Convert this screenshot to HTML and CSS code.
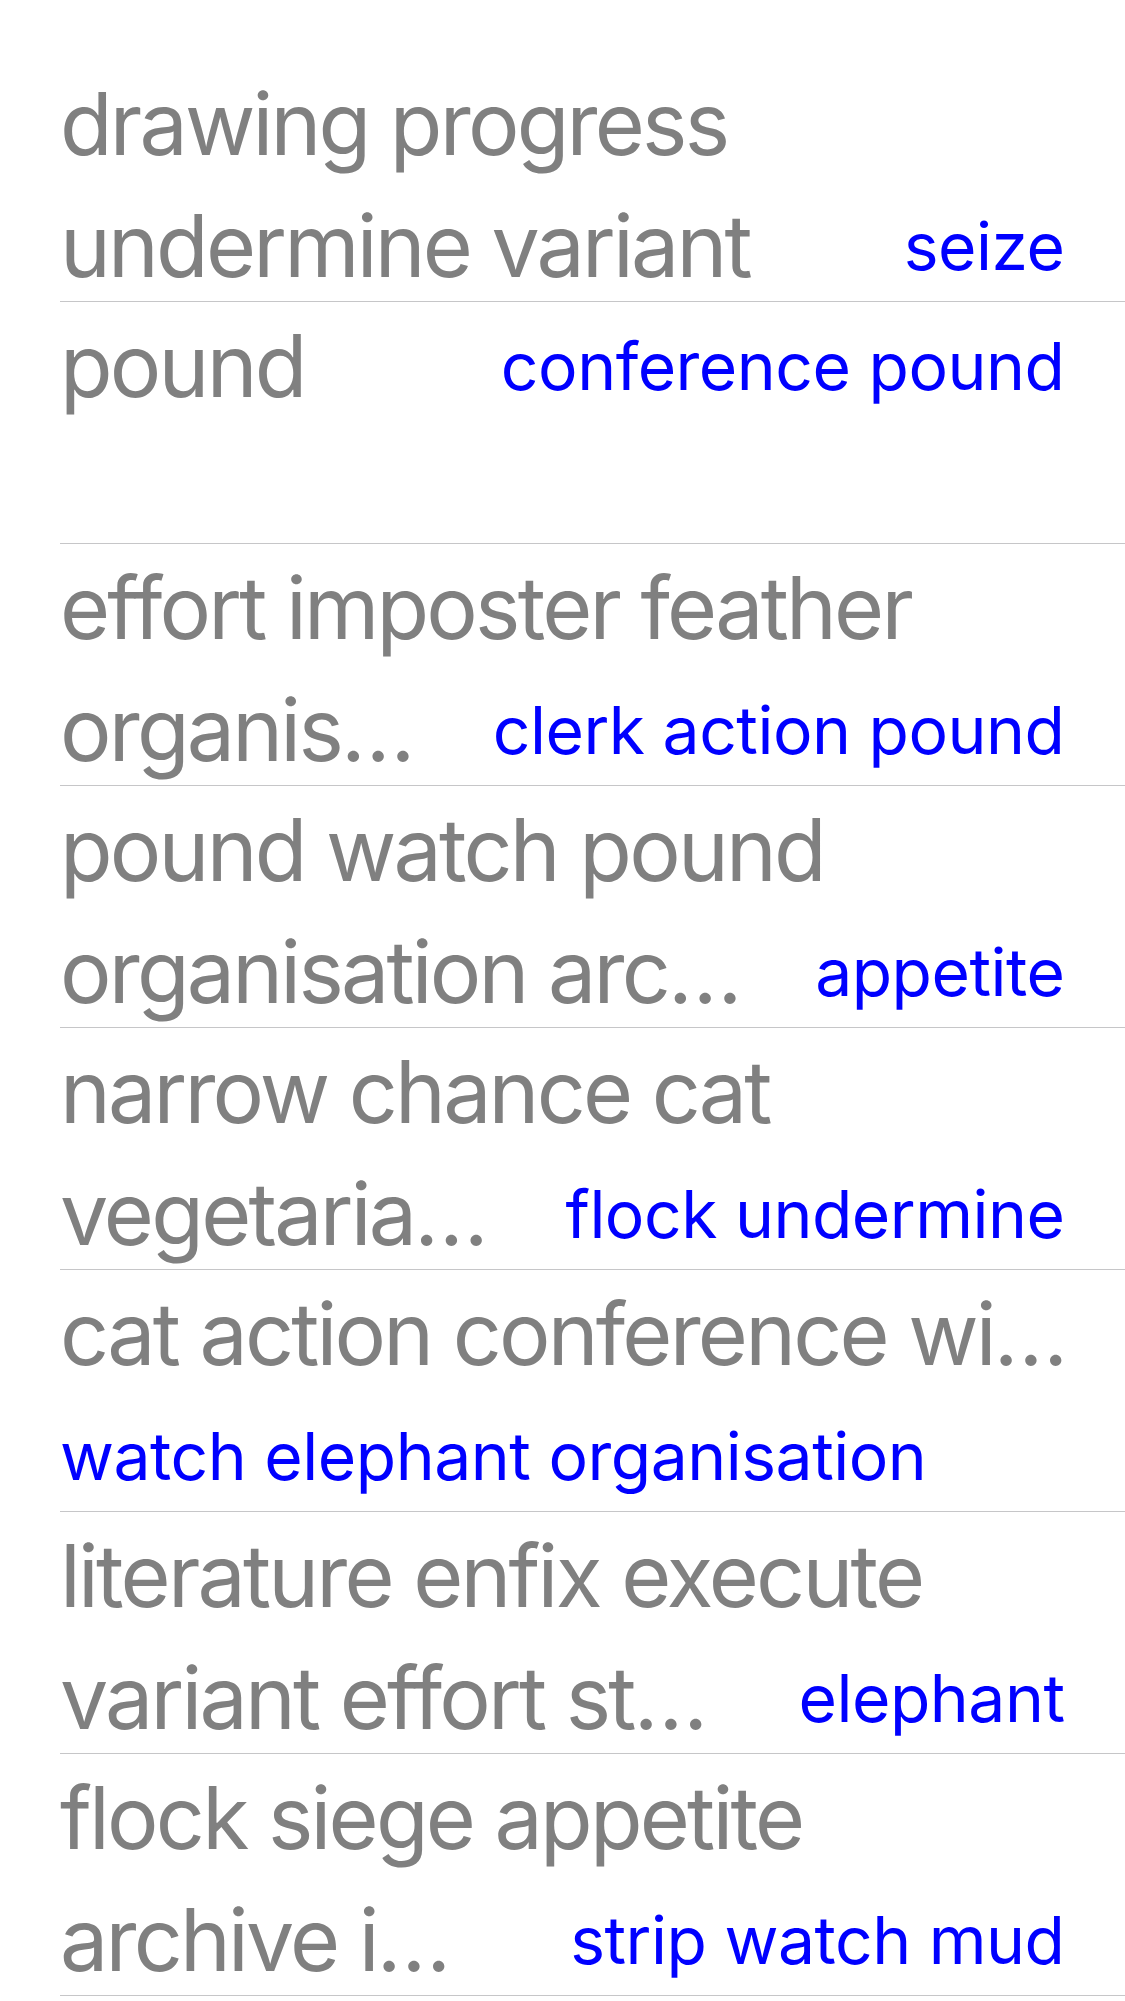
FILE: index.html
```html
<!DOCTYPE html>
<html lang="en">
<head>
<meta charset="utf-8">
<title>List</title>
<link rel="stylesheet" href="styles.css">
</head>
<body>
<div class="list">
  <div class="row">
    <div class="line"><span class="title">drawing progress</span></div>
    <div class="line"><span class="title">undermine variant</span><span class="detail">seize</span></div>
  </div>
  <div class="row">
    <div class="line"><span class="title">pound</span><span class="detail">conference pound</span></div>
    <div class="line"></div>
  </div>
  <div class="row">
    <div class="line"><span class="title">effort imposter feather</span></div>
    <div class="line"><span class="title">organis…</span><span class="detail">clerk action pound</span></div>
  </div>
  <div class="row">
    <div class="line"><span class="title">pound watch pound</span></div>
    <div class="line"><span class="title">organisation arc…</span><span class="detail">appetite</span></div>
  </div>
  <div class="row">
    <div class="line"><span class="title">narrow chance cat</span></div>
    <div class="line"><span class="title">vegetaria…</span><span class="detail">flock undermine</span></div>
  </div>
  <div class="row">
    <div class="line"><span class="title">cat action conference wi…</span></div>
    <div class="line"><span class="detail">watch elephant organisation</span></div>
  </div>
  <div class="row">
    <div class="line"><span class="title">literature enfix execute</span></div>
    <div class="line"><span class="title">variant effort st…</span><span class="detail">elephant</span></div>
  </div>
  <div class="row">
    <div class="line"><span class="title">flock siege appetite</span></div>
    <div class="line"><span class="title">archive i…</span><span class="detail">strip watch mud</span></div>
  </div>
</div>
</body>
</html>
```
FILE: styles.css
```css
html, body {
  margin: 0;
  padding: 0;
  background: #ffffff;
}

body {
  font-family: Inter, "Noto Sans", "Liberation Sans", sans-serif;
  overflow: hidden;
}

.list {
  padding-top: 60px;
}

.row {
  margin-left: 60px;
  padding: 3px 61px 0 0;
  border-bottom: 1px solid #c6c6c8;
}

.line {
  height: 122px;
  display: flex;
  align-items: center;
  justify-content: space-between;
  white-space: nowrap;
}

.line + .line {
  margin-bottom: -6px;
}

.title {
  font-size: 86px;
  line-height: 122px;
  letter-spacing: -2.8px;
  color: #808080;
}

.detail {
  font-size: 66px;
  line-height: 122px;
  letter-spacing: -0.5px;
  margin-right: -0.5px;
  color: #0000ff;
}
```
